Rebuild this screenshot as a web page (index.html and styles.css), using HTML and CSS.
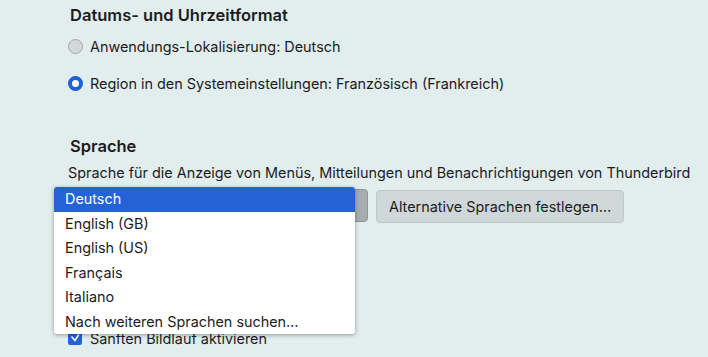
FILE: index.html
```html
<!DOCTYPE html>
<html lang="de">
<head>
  <meta charset="UTF-8" />
  <title>Einstellungen - Sprache</title>
  <link rel="stylesheet" href="styles.css">
</head>
<body>

<div class="page">
  <h2>Datums- und Uhrzeitformat</h2>
  <label class="radio-row"><span class="radio"></span>Anwendungs-Lokalisierung: Deutsch</label>
  <label class="radio-row"><span class="radio checked"></span>Region in den Systemeinstellungen: Französisch (Frankreich)</label>

  <h2 class="sprache">Sprache</h2>
  <p class="desc">Sprache für die Anzeige von Menüs, Mitteilungen und Benachrichtigungen von Thunderbird</p>

  <div class="lang-row">
    <div class="select-btn">Deutsch</div>
    <button class="btn">Alternative Sprachen festlegen…</button>

    <ul class="popup">
      <li class="selected">Deutsch</li>
      <li>English (GB)</li>
      <li>English (US)</li>
      <li>Français</li>
      <li>Italiano</li>
      <li>Nach weiteren Sprachen suchen…</li>
    </ul>
  </div>

  <label class="check-row">
    <span class="checkbox">
      <svg width="10" height="10" viewBox="0 0 10 10"><path d="M1.5 3.5 L5 7.5 L8.8 1.5" fill="none" stroke="#fff" stroke-width="1.6"/></svg>
    </span>Sanften Bildlauf aktivieren
  </label>
</div>

</body>
</html>
```

FILE: styles.css
```css
body {
  margin: 0;
  background-color: #e2eded;
  font-family: Inter, "Liberation Sans", Arial, sans-serif;
  color: #1c1c1e;
  font-size: 14.4px;
  overflow: hidden;
}
.page {
  padding: 4px 0 0 68px;
}
h2 {
  margin: 0 0 0 2px;
  font-size: 16.5px;
  font-weight: 600;
  line-height: 22px;
}
.radio-row {
  display: flex;
  align-items: center;
  height: 24px;
  margin-top: 8px;
}
.radio-row + .radio-row { margin-top: 13px; }
.radio {
  width: 13px;
  height: 13px;
  border-radius: 50%;
  border: 1px solid #a4aaaa;
  background: #d3d8d8;
  margin-right: 7px;
}
.radio.checked {
  width: 7px;
  height: 7px;
  border: 4px solid #1f5fd8;
  background: #fff;
}
.sprache { margin-top: 40px; }
.desc {
  margin: 6px 0 0 0;
  line-height: 20px;
  white-space: nowrap;
}
.lang-row {
  position: relative;
  display: flex;
  gap: 8px;
  margin-top: 6px;
  height: 33px;
}
.select-btn {
  width: 298px;
  height: 31px;
  border: 1px solid #8e9494;
  border-radius: 4px;
  background: #a7adad;
  color: transparent;
}
.btn {
  height: 33px;
  padding: 0 12px;
  font: inherit;
  color: #1c1c1e;
  background: #cfd7d8;
  border: 1px solid #bfc8c9;
  border-radius: 4px;
  margin-top: 1px;
}
.popup {
  position: absolute;
  left: -14px;
  top: -2px;
  width: 301px;
  margin: 0;
  padding: 0;
  list-style: none;
  background: #fff;
  border-radius: 3px;
  box-shadow: 0 1px 4px rgba(0, 0, 0, 0.35);
  z-index: 2;
}
.popup li {
  height: 24.5px;
  line-height: 24.5px;
  padding-left: 11px;
}
.popup li.selected {
  background: #2462d8;
  color: #fff;
  border-radius: 3px 3px 0 0;
}
.check-row {
  display: flex;
  align-items: center;
  margin-top: 108px;
  height: 16px;
}
.checkbox {
  width: 14px;
  height: 14px;
  border-radius: 2px;
  background: #2462d8;
  display: flex;
  align-items: center;
  justify-content: center;
  margin-right: 8px;
}
```
